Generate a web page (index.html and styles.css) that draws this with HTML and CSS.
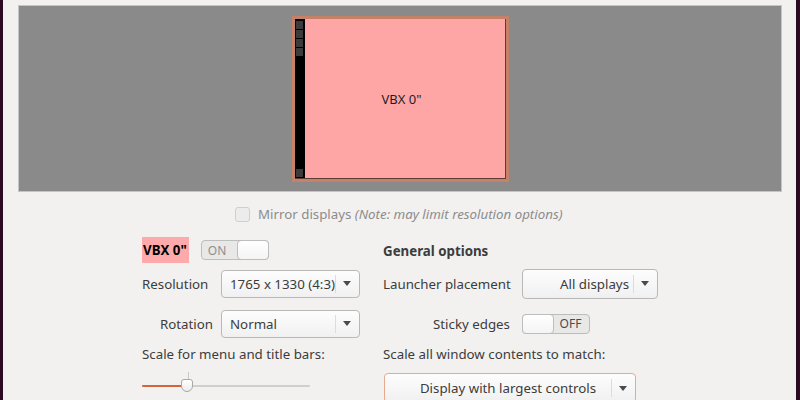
FILE: index.html
```html
<!DOCTYPE html>
<html>
<head>
<meta charset="utf-8">
<link rel="stylesheet" href="styles.css">
</head>
<body>
<div class="window">
  <div class="preview">
    <div class="monitor">
      <div class="monitor-inner">
        <div class="launcher">
          <span class="lsq"></span><span class="lsq"></span><span class="lsq"></span><span class="lsq"></span>
          <span class="lspacer"></span>
          <span class="lsq"></span>
        </div>
        <div class="screen">VBX 0"</div>
      </div>
    </div>
  </div>

  <div class="mirror-row">
    <span class="checkbox"></span>
    <span class="mirror-text">Mirror displays <i>(Note: may limit resolution options)</i></span>
  </div>

  <div class="columns">
    <div class="col col-left">
      <div class="row head-row">
        <span class="display-name">VBX 0"</span>
        <span class="switch on"><span class="sw-text">ON</span><span class="knob"></span></span>
      </div>
      <div class="row form-row">
        <span class="label">Resolution</span>
        <span class="combo combo-res"><span class="combo-text">1765 x 1330 (4:3)</span><span class="sep"></span><span class="arrow"></span></span>
      </div>
      <div class="row form-row last">
        <span class="label label-right">Rotation</span>
        <span class="combo combo-rot"><span class="combo-text">Normal</span><span class="sep"></span><span class="arrow"></span></span>
      </div>
      <div class="row text-row">Scale for menu and title bars:</div>
      <div class="slider">
        <span class="track"></span>
        <span class="fill"></span>
        <span class="tick"></span>
        <span class="thumb"></span>
      </div>
    </div>

    <div class="col col-right">
      <div class="row head-row"><span class="section-title">General options</span></div>
      <div class="row form-row">
        <span class="label">Launcher placement</span>
        <span class="combo combo-launch"><span class="combo-text right">All displays</span><span class="sep"></span><span class="arrow"></span></span>
      </div>
      <div class="row form-row last">
        <span class="label label-sticky">Sticky edges</span>
        <span class="switch off"><span class="knob"></span><span class="sw-text">OFF</span></span>
      </div>
      <div class="row text-row">Scale all window contents to match:</div>
      <div class="row scale-row">
        <span class="combo combo-scale focus"><span class="combo-text center">Display with largest controls</span><span class="sep"></span><span class="arrow"></span></span>
      </div>
    </div>
  </div>
</div>
</body>
</html>
```

FILE: styles.css
```css
html, body {
  margin: 0;
  padding: 0;
}
body {
  width: 800px;
  height: 400px;
  overflow: hidden;
  background: #f2f1f0;
  font-family: "Noto Sans", "DejaVu Sans", sans-serif;
  font-size: 13.3px;
  color: #3c3c3c;
}
.window {
  box-sizing: border-box;
  height: 400px;
  border-left: 3px solid #2c0a22;
  border-right: 4px solid #2c0a22;
  display: flex;
  flex-direction: column;
}
.window > * {
  flex: none;
}
.preview {
  margin: 5px 14px 0 15px;
  height: 185px;
  background: #8a8a8a;
  border: 1px solid #c4c4c4;
  display: flex;
  align-items: center;
  justify-content: center;
}
.monitor {
  width: 211px;
  height: 160px;
  border: 3px solid #c58268;
  margin-top: 1px;
}
.monitor-inner {
  box-sizing: border-box;
  height: 100%;
  display: flex;
  border-right: 1px solid #5c3c34;
  border-bottom: 1px solid #5c3c34;
}
.launcher {
  width: 10px;
  background: #000;
  display: flex;
  flex-direction: column;
  align-items: center;
  padding: 2px 0 1px;
  gap: 1px;
}
.lsq {
  width: 7px;
  height: 8px;
  background: #3b3b3b;
}
.lspacer {
  flex: 1;
}
.screen {
  flex: 1;
  background: #fea6a6;
  color: #1e1e1e;
  display: flex;
  align-items: center;
  justify-content: center;
  font-size: 13px;
  padding-right: 6px;
}
.mirror-row {
  display: flex;
  align-items: center;
  margin: 14px 0 0 232px;
  height: 16px;
  gap: 8px;
  color: #8c8c8c;
}
.checkbox {
  width: 13px;
  height: 13px;
  border: 1px solid #cfcfcf;
  border-radius: 3px;
  background: #ececec;
}
.mirror-text i {
  font-style: italic;
}
.columns {
  display: flex;
  margin: 15px 0 0 139px;
}
.col {
  display: flex;
  flex-direction: column;
}
.col > * {
  flex: none;
}
.col-left {
  width: 241px;
}
.row {
  display: flex;
  align-items: center;
}
.head-row {
  height: 26px;
  margin-bottom: 6px;
}
.display-name {
  background: #ffaaaa;
  color: #000;
  font-weight: bold;
  padding: 4px 2px 4px 1px;
  margin-right: 12px;
}
.section-title {
  font-weight: bold;
  color: #3c3c3c;
  margin-top: 1px;
}
.switch {
  box-sizing: border-box;
  width: 68px;
  height: 20px;
  border: 1px solid #bdbdbd;
  border-radius: 4px;
  background: #e8e8e6;
  display: flex;
  align-items: center;
  color: #8f8f8f;
  font-size: 12px;
}
.switch .knob {
  box-sizing: border-box;
  width: 32px;
  height: 20px;
  border: 1px solid #bdbdbd;
  border-radius: 4px;
  background: linear-gradient(#ffffff, #f4f4f4);
  margin: -1px;
}
.switch.on .sw-text {
  flex: 1;
  padding-left: 6px;
}
.switch.off .sw-text {
  flex: 1;
  text-align: center;
  color: #4a4a4a;
  padding-right: 1px;
}
.form-row {
  height: 29px;
  margin-bottom: 11px;
}
.form-row.last {
  margin-bottom: 7px;
}
.label {
  width: 79px;
  flex: none;
}
.label-right {
  text-align: right;
  width: 71px;
  margin-right: 8px;
}
.col-right .label {
  width: 139px;
}
.col-right .label-sticky {
  text-align: right;
  width: 127px;
  margin-right: 12px;
}
.combo {
  box-sizing: border-box;
  height: 28px;
  border: 1px solid #b8b8b8;
  border-radius: 4px;
  background: linear-gradient(#fdfdfd, #f0f0f0);
  display: flex;
  align-items: center;
  color: #3c3c3c;
}
.combo-text {
  flex: 1;
  padding-left: 8px;
  white-space: nowrap;
}
.combo-text.right {
  text-align: right;
  padding-right: 4px;
}
.combo-text.center {
  text-align: center;
  padding-left: 20px;
  padding-right: 0;
}
.sep {
  width: 1px;
  height: 18px;
  background: #dcdcdc;
}
.arrow {
  width: 0;
  height: 0;
  border-left: 4px solid transparent;
  border-right: 4px solid transparent;
  border-top: 5px solid #4a4a4a;
  margin: 0 8px 0 7px;
}
.combo-res, .combo-rot {
  width: 139px;
}
.combo-launch {
  width: 136px;
  height: 30px;
}
.combo-scale {
  width: 252px;
  height: 30px;
  margin-left: 1px;
}
.combo.focus {
  border-color: #e9a98e;
}
.text-row {
  height: 18px;
  margin-bottom: 10px;
}
.slider {
  position: relative;
  height: 26px;
  width: 168px;
  margin-left: 0;
  margin-top: -1px;
}
.track {
  position: absolute;
  left: 0;
  right: 0;
  top: 13px;
  height: 2px;
  background: #cfcfcf;
  border-radius: 1px;
}
.fill {
  position: absolute;
  left: 0;
  width: 42px;
  top: 13px;
  height: 2px;
  background: #d3633c;
  border-radius: 1px;
}
.tick {
  position: absolute;
  left: 46px;
  top: 0;
  width: 1px;
  height: 8px;
  background: #c8c8c8;
}
.thumb {
  position: absolute;
  left: 39px;
  top: 7px;
  width: 12px;
  height: 13px;
  box-sizing: border-box;
  border: 1px solid #a8a8a8;
  border-radius: 3px 3px 6px 6px;
  background: linear-gradient(#ffffff, #ececec);
}
```
